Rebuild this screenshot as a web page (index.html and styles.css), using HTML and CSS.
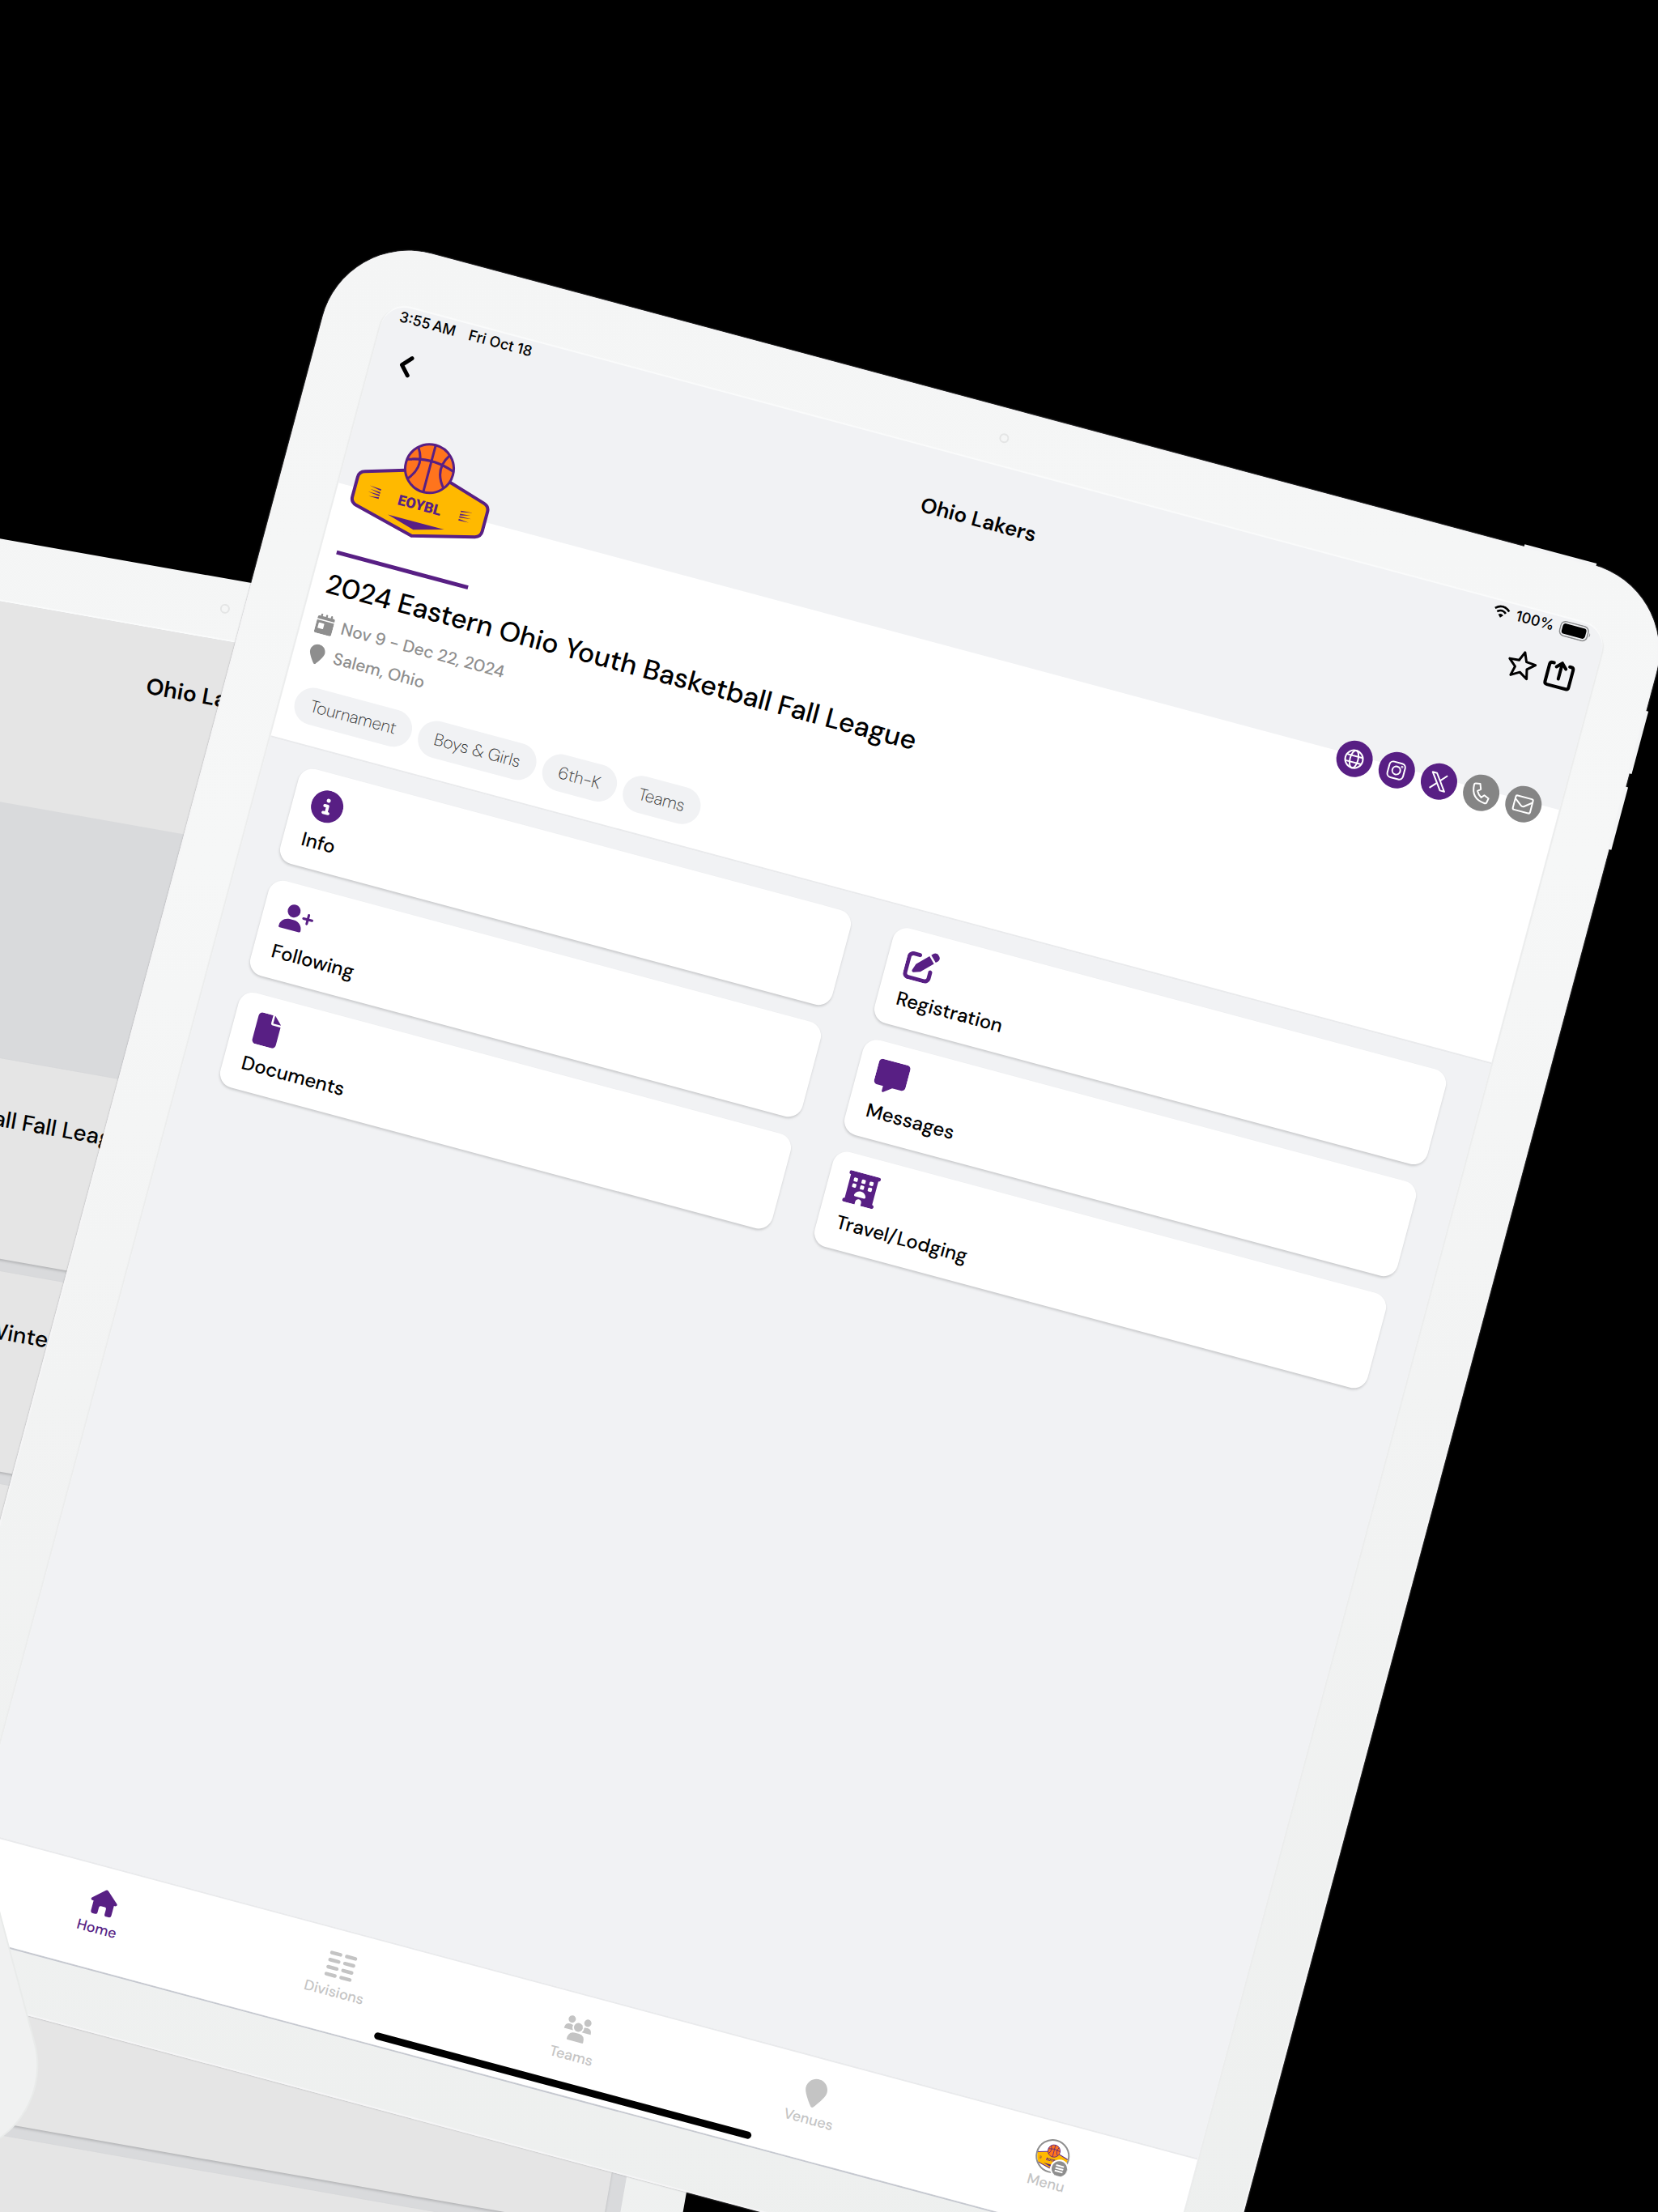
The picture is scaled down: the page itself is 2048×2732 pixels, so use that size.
FILE: index.html
```html
<!DOCTYPE html>
<html lang="en">
<head>
    <meta charset="UTF-8">
    <meta name="viewport" content="width=device-width, initial-scale=1.0">
    <title>Ohio Lakers</title>
    <link rel="stylesheet" href="styles.css">
</head>
<body>
    <!-- shared logo -->
    <svg class="sprite" aria-hidden="true">
        <symbol id="logo" viewBox="0 0 172 122">
            <path d="M10 57 L86 34 L162 57 Q169 59 169 66 L169 91 Q169 98 162 100 L86 119 L10 100 Q3 98 3 91 L3 66 Q3 59 10 57Z" fill="#ffb900" stroke="#581f84" stroke-width="4"/>
            <circle cx="86" cy="33" r="30" fill="#ff741d" stroke="#581f84" stroke-width="3"/>
            <path d="M86 3V63M56.500 29Q86 18 115.500 29M66 11Q80 32 63 52M106 11Q92 32 109 52" fill="none" stroke="#581f84" stroke-width="3"/>
            <path d="M51 101H123L86 111Z" fill="#581f84"/>
            <path d="M20 72L35 73V75ZM22 76L35 77V79ZM20 80L35 80V82ZM22 85L35 83.500V85.500ZM152 72L137 73V75ZM150 76L137 77V79ZM152 80L137 80V82ZM150 85L137 83.500V85.500Z" fill="#581f84"/>
            <text x="86" y="86" text-anchor="middle" class="logo-text">EOYBL</text>
        </symbol>
    </svg>

    <div class="stage">
        <div class="tablet tablet-back">
            <div class="camera"></div>
            <div class="screen">
                <div class="list-header">Ohio Lakers</div>
                <div class="list-banner"></div>
                <div class="event-list">
                    <div class="event">2024 Eastern Ohio Youth Basketball Fall League</div>
                    <div class="event">2024 Eastern Ohio Youth Basketball Winter League</div>
                    <div class="event event-tall"></div>
                    <div class="event"></div>
                    <div class="event"></div>
                    <div class="event"></div>
                </div>
            </div>
        </div>

        <div class="tablet tablet-main">
            <div class="camera"></div>
            <div class="side-button power"></div>
            <div class="side-button volume-up"></div>
            <div class="side-button volume-down"></div>
            <div class="screen">
                <header class="header">
                    <div class="status-bar">
                        <span>3:55&#8239;AM</span>
                        <span>Fri Oct 18</span>
                        <div class="status-right">
                            <svg width="22" height="16" viewBox="0 0 22 16"><path d="M2 5.500Q11-2.500 20 5.500M5.500 9Q11 4.200 16.500 9" fill="none" stroke="#000" stroke-width="2.600"/><path d="M11 15.500L7.800 12Q11 9.400 14.200 12Z"/></svg>
                            <span>100%</span>
                            <svg width="40" height="20" viewBox="0 0 40 20"><rect x="1" y="1" width="35" height="18" rx="6" fill="none" stroke="#8b8c8e" stroke-width="1.500"/><rect x="3.500" y="3.500" width="30" height="13" rx="3.500"/><path d="M38 7q2 3 0 6z" fill="#8b8c8e"/></svg>
                        </div>
                    </div>
                    <div class="toolbar">
                        <button class="icon-button back" aria-label="Back">
                            <svg width="18" height="28" viewBox="0 0 18 28"><path d="M14 3L4 14L14 25" fill="none" stroke="#000" stroke-width="5" stroke-linecap="round" stroke-linejoin="round"/></svg>
                        </button>
                        <h1>Ohio Lakers</h1>
                        <div class="toolbar-actions">
                            <button class="icon-button" aria-label="Favorite">
                                <svg width="38" height="38" viewBox="0 0 38 38"><path d="M19 3L23.700 14L35.500 15L26.500 22.800L29.200 34.300L19 28.200L8.800 34.300L11.500 22.800L2.500 15L14.300 14Z" fill="none" stroke="#000" stroke-width="3" stroke-linejoin="round"/></svg>
                            </button>
                            <button class="icon-button" aria-label="Share">
                                <svg width="38" height="38" viewBox="0 0 38 38"><path d="M9 6H7Q4 6 4 9V31Q4 34 7 34H31Q34 34 34 31V9Q34 6 31 6H29M19 24V5M13 10L19 4L25 10" fill="none" stroke="#000" stroke-width="4" stroke-linecap="round" stroke-linejoin="round"/></svg>
                            </button>
                        </div>
                    </div>
                </header>

                <section class="hero">
                    <div class="hero-top">
                        <svg class="logo"><use href="#logo"/></svg>
                        <div class="socials">
                            <a href="#" aria-label="Website"><svg viewBox="0 0 26 26"><circle cx="13" cy="13" r="11"/><ellipse cx="13" cy="13" rx="5" ry="11"/><path d="M3 9H23M3 17H23"/></svg></a>
                            <a href="#" aria-label="Instagram"><svg viewBox="0 0 26 26"><rect x="3" y="3" width="20" height="20" rx="5"/><circle cx="13" cy="13" r="5"/><circle cx="19" cy="7" r=".5"/></svg></a>
                            <a href="#" aria-label="X"><svg viewBox="0 0 26 26"><path d="M3 3H8.500L23 23H17.500ZM22 3L14.500 11.300M11.500 14.700L4 23"/></svg></a>
                            <a href="#" class="muted" aria-label="Phone"><svg viewBox="0 0 26 26"><path d="M4 3L9.500 2L12 8.500L8.500 11.500Q11 16 15 18L18 14.500L24 17L23 22.500Q22.700 24 21 24Q3 23 2.500 5Q2.500 3.300 4 3Z"/></svg></a>
                            <a href="#" class="muted" aria-label="Email"><svg viewBox="0 0 26 26"><rect x="2" y="4" width="22" height="18" rx="2"/><path d="M2 8L11 15Q13 16.500 15 15L24 8"/></svg></a>
                        </div>
                    </div>
                    <div class="accent"></div>
                    <h2>2024 Eastern Ohio Youth Basketball Fall League</h2>
                    <p class="meta"><svg viewBox="0 0 448 512"><path d="M96 0c14 0 24 10 24 24V64H200V24c0-32 48-32 48 0V64H328V24c0-32 48-32 48 0V64h24c26.500 0 48 21.500 48 48v32H0V112C0 85.500 21.500 64 48 64H72V24c0-14 10-24 24-24zM0 176H448V464c0 26.500-21.500 48-48 48H48c-26.500 0-48-21.500-48-48V176zm80 64c-9 0-16 7-16 16v112c0 9 7 16 16 16h112c9 0 16-7 16-16V256c0-9-7-16-16-16H80z"/></svg>Nov 9 - Dec 22, 2024</p>
                    <p class="meta"><svg viewBox="0 0 384 512"><path d="M384 192c0 87.400-117 243-168.300 307.200c-12.300 15.300-35.100 15.300-47.400 0C117 435 0 279.400 0 192C0 86 86 0 192 0S384 86 384 192z"/></svg>Salem, Ohio</p>
                    <div class="chips">
                        <span>Tournament</span>
                        <span>Boys &amp; Girls</span>
                        <span>6th-K</span>
                        <span>Teams</span>
                    </div>
                </section>

                <main class="cards">
                    <a href="#" class="card">
                        <svg viewBox="0 0 512 512"><path d="M256 512A256 256 0 1 0 256 0a256 256 0 1 0 0 512zM216 336h24V272H216c-13.300 0-24-10.700-24-24s10.700-24 24-24h48c13.300 0 24 10.700 24 24v88h8c13.300 0 24 10.700 24 24s-10.700 24-24 24H216c-13.300 0-24-10.700-24-24s10.700-24 24-24zm40-208a32 32 0 1 1 0 64 32 32 0 1 1 0-64z"/></svg>
                        Info
                    </a>
                    <a href="#" class="card">
                        <svg viewBox="0 0 512 512"><path d="M471.600 21.700c-21.900-21.900-57.300-21.900-79.200 0L362.300 51.700l97.900 97.900 30.100-30.100c21.900-21.900 21.900-57.300 0-79.200L471.600 21.700zm-299.200 220c-6.100 6.100-10.800 13.600-13.500 21.900l-29.600 88.800c-2.900 8.600-.6 18.100 5.800 24.600s15.900 8.700 24.600 5.800l88.800-29.600c8.200-2.700 15.700-7.400 21.900-13.500L437.700 172.300 339.700 74.300 172.400 241.700zM96 64C43 64 0 107 0 160V416c0 53 43 96 96 96H352c53 0 96-43 96-96V320c0-17.700-14.300-32-32-32s-32 14.300-32 32v96c0 17.700-14.300 32-32 32H96c-17.700 0-32-14.300-32-32V160c0-17.700 14.300-32 32-32h96c17.700 0 32-14.300 32-32s-14.300-32-32-32H96z"/></svg>
                        Registration
                    </a>
                    <a href="#" class="card">
                        <svg viewBox="0 -64 640 640"><path d="M96 128a128 128 0 1 1 256 0A128 128 0 1 1 96 128zM0 482.300C0 383.800 79.800 304 178.300 304h91.400C368.200 304 448 383.800 448 482.300c0 16.400-13.300 29.700-29.700 29.700H29.700C13.300 512 0 498.700 0 482.300zM504 312V248H440c-13.300 0-24-10.700-24-24s10.700-24 24-24h64V136c0-13.300 10.700-24 24-24s24 10.700 24 24v64h64c13.300 0 24 10.700 24 24s-10.700 24-24 24H552v64c0 13.300-10.700 24-24 24s-24-10.700-24-24z"/></svg>
                        Following
                    </a>
                    <a href="#" class="card">
                        <svg viewBox="0 0 512 512"><path d="M64 0C28.700 0 0 28.700 0 64V352c0 35.300 28.700 64 64 64h96v80c0 6.100 3.400 11.600 8.800 14.300s11.900 2.100 16.800-1.500L309.300 416H448c35.300 0 64-28.700 64-64V64c0-35.300-28.700-64-64-64H64z"/></svg>
                        Messages
                    </a>
                    <a href="#" class="card">
                        <svg viewBox="-64 0 512 512"><path d="M0 64C0 28.700 28.700 0 64 0H224V128c0 17.700 14.300 32 32 32H384V448c0 35.300-28.700 64-64 64H64c-35.300 0-64-28.700-64-64V64zm384 64H256V0L384 128z"/></svg>
                        Documents
                    </a>
                    <a href="#" class="card">
                        <svg viewBox="0 0 512 512"><path d="M0 32C0 14.300 14.300 0 32 0H480c17.700 0 32 14.300 32 32s-14.300 32-32 32V448c17.700 0 32 14.300 32 32s-14.300 32-32 32H304V464c0-26.500-21.500-48-48-48s-48 21.500-48 48v48H32c-17.700 0-32-14.300-32-32s14.300-32 32-32V64C14.300 64 0 49.700 0 32zm96 80v32c0 8.800 7.200 16 16 16h32c8.800 0 16-7.200 16-16V112c0-8.800-7.200-16-16-16H112c-8.800 0-16 7.200-16 16zM240 96c-8.800 0-16 7.200-16 16v32c0 8.800 7.200 16 16 16h32c8.800 0 16-7.200 16-16V112c0-8.800-7.200-16-16-16H240zm112 16v32c0 8.800 7.200 16 16 16h32c8.800 0 16-7.200 16-16V112c0-8.800-7.200-16-16-16H368c-8.800 0-16 7.200-16 16zM112 192c-8.800 0-16 7.200-16 16v32c0 8.800 7.200 16 16 16h32c8.800 0 16-7.200 16-16V208c0-8.800-7.200-16-16-16H112zm112 16v32c0 8.800 7.200 16 16 16h32c8.800 0 16-7.200 16-16V208c0-8.800-7.200-16-16-16H240c-8.800 0-16 7.200-16 16zm144-16c-8.800 0-16 7.200-16 16v32c0 8.800 7.200 16 16 16h32c8.800 0 16-7.200 16-16V208c0-8.800-7.200-16-16-16H368zM328 384c13.300 0 24.300-10.900 21-23.800c-10.600-41.500-48.200-72.200-93-72.200s-82.500 30.700-93 72.200c-3.300 12.800 7.800 23.800 21 23.800H328z"/></svg>
                        Travel/Lodging
                    </a>
                </main>

                <nav class="tabs">
                    <a href="#" class="active">
                        <svg viewBox="0 0 36 36"><path d="M16.500 2.500Q18 1.200 19.500 2.500L34 15.500Q35.500 17.500 33 18.500H31V31Q31 34 28 34H25Q22.500 34 22.500 31.500V25Q22.500 23 20.500 23H15.500Q13.500 23 13.500 25V31.500Q13.500 34 11 34H8Q5 34 5 31V18.500H3Q.5 17.500 2 15.500Z"/></svg>
                        Home
                    </a>
                    <a href="#">
                        <svg viewBox="0 0 36 36"><path d="M3 4.500H14M22 4.500H33M3 13.500H14M22 13.500H33M3 22.500H14M22 22.500H33M3 31.500H14M22 31.500H33" stroke="#c4c4c4" stroke-width="4.500" stroke-linecap="round"/></svg>
                        Divisions
                    </a>
                    <a href="#">
                        <svg viewBox="0 0 36 36"><circle cx="8" cy="7" r="4.500"/><circle cx="28" cy="7" r="4.500"/><circle cx="18" cy="15" r="5.500"/><path d="M1 20Q1 13 7 13Q10 13 11 14Q10 17 12.500 20ZM35 20Q35 13 29 13Q26 13 25 14Q26 17 23.500 20ZM7.500 32Q7.500 22.500 15 22.500H21Q28.500 22.500 28.500 32Q28.500 33 27 33H9Q7.500 33 7.500 32Z"/></svg>
                        Teams
                    </a>
                    <a href="#">
                        <svg viewBox="0 0 384 512"><path d="M384 192c0 87.400-117 243-168.300 307.200c-12.300 15.300-35.100 15.300-47.400 0C117 435 0 279.400 0 192C0 86 86 0 192 0S384 86 384 192z"/></svg>
                        Venues
                    </a>
                    <a href="#">
                        <svg viewBox="0 0 44 44" class="avatar">
                            <clipPath id="round"><circle cx="22" cy="22" r="19"/></clipPath>
                            <circle cx="22" cy="22" r="20" fill="#fff" stroke="#8e8e8e" stroke-width="2"/>
                            <g clip-path="url(#round)"><use href="#logo" x="0" y="7" width="44" height="31"/></g>
                            <circle cx="34" cy="35" r="10.500" fill="#8e8e8e" stroke="#fff" stroke-width="2"/>
                            <path d="M29 31.500H39M29 35H39M29 38.500H39" stroke="#fff" stroke-width="2"/>
                        </svg>
                        Menu
                    </a>
                    <div class="home-indicator"></div>
                </nav>
            </div>
        </div>

        <div class="tablet tablet-front"></div>
    </div>
</body>
</html>
```
FILE: styles.css
```css
* {
    box-sizing: border-box;
}
body {
    margin: 0;
    background-color: #000;
    color: #000;
    font-family: "DM Sans", Lato, sans-serif;
}
h1, h2, p {
    margin: 0;
    font-weight: 500;
}
a {
    color: inherit;
    text-decoration: none;
}
.sprite {
    position: absolute;
    width: 0;
    height: 0;
}
.logo-text {
    font-family: Roboto, sans-serif;
    font-size: 18px;
    font-weight: 900;
    fill: #581f84;
}

/* tablets lying on the dark background */
.stage {
    position: relative;
    height: 100vh;
    overflow: hidden;
}
.tablet {
    position: absolute;
    border-radius: 110px;
    background: linear-gradient(165deg, #f4f5f5, #f6f7f7 30%, #f2f3f3 55%, #edefee);
}
.tablet-back {
    left: -29.45%;
    top: 559px;
    width: 88%;
    aspect-ratio: 1705 / 2231;
    padding: 76px;
    transform: rotate(10deg);
    transform-origin: 0 0;
}
.tablet-main {
    left: 20.83%;
    top: 285px;
    width: 83.25%;
    aspect-ratio: 1705 / 2231;
    padding: 72px 72px 76px;
    transform: rotate(15deg);
    transform-origin: 0 0;
    box-shadow: inset 0 0 0 2px #f5f5f6, 0 0 2px #9a9a9e;
}
.tablet-front {
    right: 96.5%;
    bottom: 103px;
    width: 83.25%;
    aspect-ratio: 1705 / 2231;
    background: #f0f1f1;
    border: 2px solid #e9ebea;
    transform: rotate(-15deg);
    transform-origin: 100% 100%;
}
.camera {
    position: absolute;
    top: 31px;
    left: 50%;
    width: 12px;
    height: 12px;
    margin-left: -6px;
    border: 2px solid #e4e5e5;
    border-radius: 50%;
}
.side-button {
    position: absolute;
    background-color: #f3f4f5;
}
.power {
    top: -3px;
    right: 106px;
    width: 92px;
    height: 4px;
}
.volume-up, .volume-down {
    right: -3px;
    width: 4px;
    height: 80px;
}
.volume-up {
    top: 157px;
}
.volume-down {
    top: 254px;
}
.screen {
    display: flex;
    flex-direction: column;
    height: 100%;
    border-radius: 30px;
    background-color: #f1f2f4;
    box-shadow: 0 -2px 1px #fafbfb, 2px 0 1px #ebecec, -2px 0 1px #ebecec, 0 2px 0 #c3c6ce;
    overflow: hidden;
}

/* event list */
.tablet-back .screen {
    background-color: #d9dadc;
    box-shadow: 0 -2px 1px #fafbfb;
}
.list-header {
    height: 244px;
    padding-top: 52px;
    background-color: #e5e5e5;
    font-size: 28px;
    line-height: 40px;
    font-weight: 600;
    text-align: center;
}
.list-banner {
    height: 312px;
}
.event-list {
    display: flex;
    flex-direction: column;
    gap: 15px;
    padding: 0 19px;
}
.event {
    height: 244px;
    flex-shrink: 0;
    padding: 54px 0 0 194px;
    background-color: #e5e5e5;
    box-shadow: 0 2px 3px #b4b5b7;
    font-size: 28px;
    line-height: 40px;
    font-weight: 500;
}
.event-tall {
    height: 259px;
}

/* header */
.header {
    height: 231px;
    flex-shrink: 0;
}
.status-bar {
    display: flex;
    align-items: center;
    gap: 17px;
    height: 25px;
    padding: 0 18px 0 20px;
    font-family: Inter, sans-serif;
    font-size: 18px;
    font-weight: 500;
}
.status-right {
    display: flex;
    align-items: center;
    gap: 7px;
    margin-left: auto;
}
.toolbar {
    display: grid;
    grid-template-columns: 1fr auto 1fr;
    align-items: center;
    height: 44px;
    margin-top: 23px;
    padding: 0 24px 0 14px;
}
.toolbar h1 {
    font-size: 26px;
    font-weight: 600;
}
.toolbar-actions {
    display: flex;
    gap: 10px;
    justify-content: flex-end;
}
.icon-button {
    display: flex;
    width: max-content;
    padding: 0;
    border: none;
    background: none;
    cursor: pointer;
}
.back {
    padding-left: 20px;
}

/* event summary */
.hero {
    padding: 0 22px 25px 18px;
    background-color: #fff;
    border-bottom: 2px solid #e9eaec;
}
.hero-top {
    display: flex;
    justify-content: space-between;
    align-items: center;
    margin-top: -79px;
    padding-bottom: 38px;
}
.logo {
    width: 172px;
    height: 122px;
}
.socials {
    display: flex;
    gap: 9px;
    padding-top: 45px;
}
.socials a {
    display: flex;
    align-items: center;
    justify-content: center;
    width: 45px;
    height: 45px;
    border-radius: 50%;
    background-color: #581f84;
}
.socials .muted {
    background-color: #858585;
}
.socials svg {
    width: 26px;
    height: 26px;
    fill: none;
    stroke: #fff;
    stroke-width: 2;
    stroke-linejoin: round;
}
.accent {
    width: 168px;
    height: 5px;
    margin: 0 2px;
    background-color: #581f84;
}
.hero h2 {
    margin: 16px 0 8px;
    font-size: 34px;
    line-height: 44px;
}
.meta {
    display: flex;
    align-items: center;
    gap: 10px;
    height: 38px;
    color: #8e8e8e;
    font-size: 21px;
}
.meta svg {
    width: 22px;
    height: 25px;
    fill: #8e8e8e;
}
.chips {
    display: flex;
    gap: 9px;
    margin-top: 22px;
}
.chips span {
    padding: 0 20px;
    border-radius: 23px;
    background-color: #f1f2f4;
    color: #333;
    font-size: 21px;
    line-height: 46px;
    font-weight: 200;
}

/* cards */
.cards {
    display: grid;
    grid-template-columns: 1fr 1fr;
    gap: 22px 54px;
    padding: 24px 47px;
}
.card {
    display: flex;
    flex-direction: column;
    gap: 11px;
    height: 121px;
    padding: 21px 23px 0;
    border-radius: 18px;
    background-color: #fff;
    box-shadow: 0 2px 3px #c9cacc;
    font-size: 24px;
    line-height: 30px;
    font-weight: 500;
}
.card svg {
    flex-shrink: 0;
    width: 40px;
    height: 40px;
    fill: #581f84;
}

/* bottom tabs */
.tabs {
    position: relative;
    display: flex;
    flex-shrink: 0;
    height: 128px;
    margin-top: auto;
    padding: 25px 22px 0;
    border-top: 2px solid #e9eaec;
    background-color: #fff;
    color: #c4c4c4;
    font-size: 18px;
    line-height: 24px;
    font-weight: 500;
}
.tabs a {
    display: flex;
    flex: 1;
    flex-direction: column;
    align-items: center;
    gap: 3px;
}
.tabs svg {
    width: 36px;
    height: 36px;
    fill: #c4c4c4;
}
.tabs .active {
    color: #581f84;
}
.tabs .active svg {
    fill: #581f84;
}
.tabs .avatar {
    width: 44px;
    height: 44px;
    margin: -5px 0 -3px;
}
.home-indicator {
    position: absolute;
    bottom: 7px;
    left: 50%;
    width: 482px;
    height: 9px;
    margin-left: -241px;
    border-radius: 5px;
    background-color: #000;
}
```
